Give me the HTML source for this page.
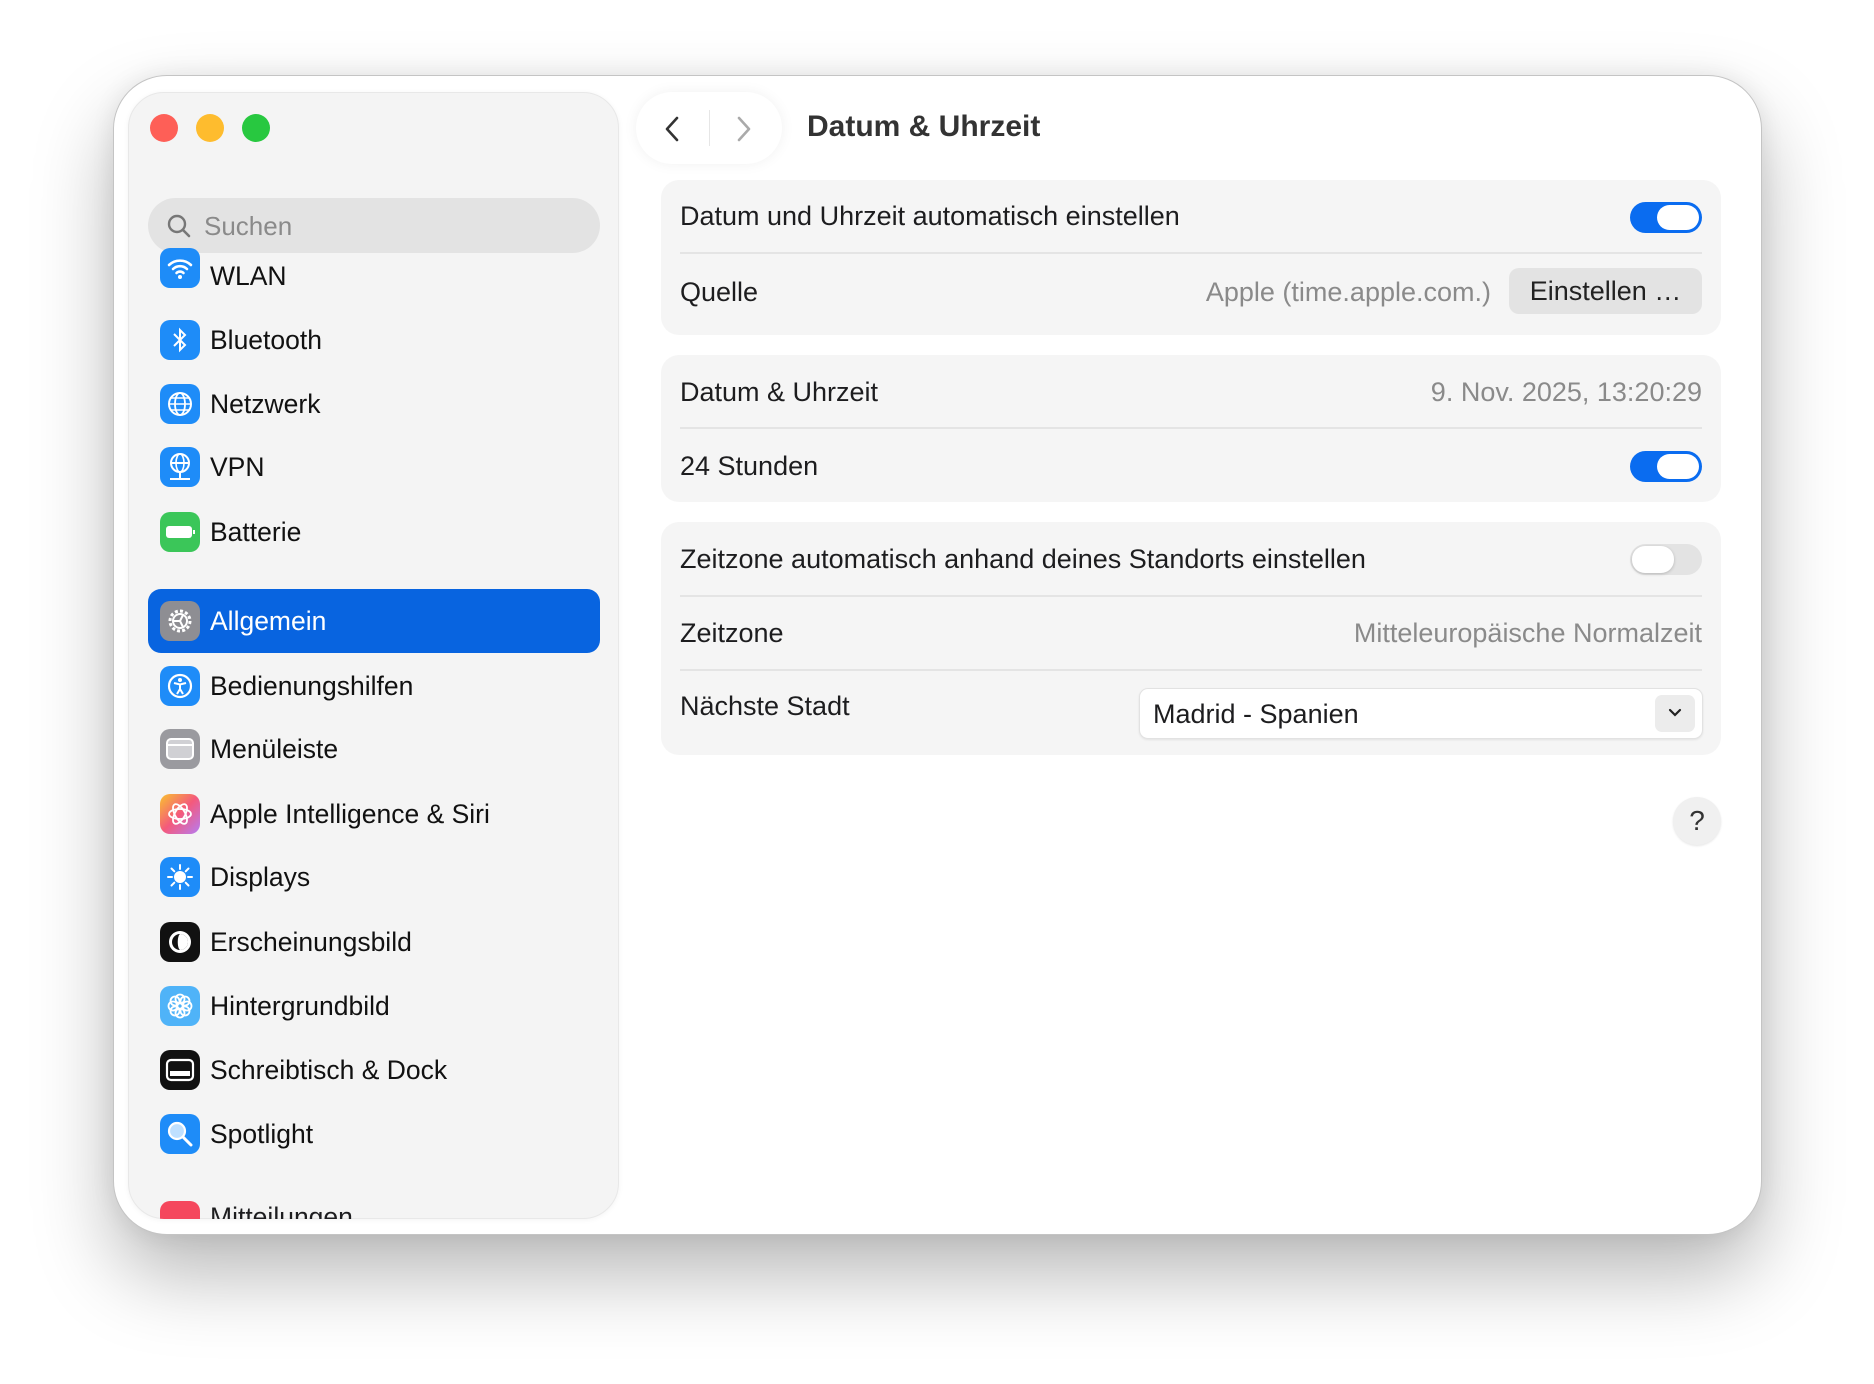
<!DOCTYPE html>
<html><head><meta charset="utf-8"><style>
*{margin:0;padding:0;box-sizing:border-box}
body{width:1874px;height:1384px;background:#fff;font-family:"Liberation Sans",sans-serif;position:relative;overflow:hidden;color:#1d1d1f}
.win{position:absolute;left:113px;top:75px;width:1649px;height:1160px;background:#fff;border-radius:54px;border:1px solid #c4c4c4;box-shadow:0 40px 80px rgba(0,0,0,.28),0 0 24px rgba(0,0,0,.08);overflow:hidden}
.side{position:absolute;left:128px;top:92px;width:491px;height:1127px;background:#f4f4f4;border-radius:36px;border:1px solid #e8e8e8;overflow:hidden;box-shadow:0 1px 6px rgba(0,0,0,.05)}
.dot{position:absolute;top:114px;width:28px;height:28px;border-radius:50%}
.search{position:absolute;left:148px;top:198px;width:452px;height:55px;background:#e3e3e3;border-radius:28px}
.search span{position:absolute;left:56px;top:13px;font-size:26px;color:#8a8a8a}
.item{position:absolute;left:148px;width:452px;height:64px}
.item .ic{position:absolute;left:12px;top:12px;width:40px;height:40px;border-radius:10px;display:flex;align-items:center;justify-content:center}
.item .t{position:absolute;left:62px;top:17px;font-size:26.5px;color:#111}
.sel{background:#0864e0;border-radius:13px}
.sel .t{color:#fff}
.nav{position:absolute;left:636px;top:92px;width:146px;height:72px;background:#fff;border-radius:36px;box-shadow:0 0 14px rgba(0,0,0,.06)}
.title{position:absolute;left:807px;top:110px;font-size:30px;font-weight:bold;color:#333}
.card{position:absolute;left:661px;width:1060px;background:#f5f5f5;border-radius:18px}
.row{position:absolute;left:19px;right:19px;font-size:27px;color:#1d1d1f}
.sep{position:absolute;left:19px;right:19px;height:2px;background:#e4e4e4}
.val{position:absolute;right:19px;font-size:27px;color:#8a8a8a}
.tog{position:absolute;width:72px;height:31px;border-radius:16px;background:#0a6cf0}
.tog::after{content:"";position:absolute;right:3px;top:3px;width:42px;height:25px;border-radius:13px;background:#fff}
.tog.off{background:#e3e3e3}
.tog.off::after{left:2px;right:auto;top:2px;width:42px;height:27px;box-shadow:0 1px 3px rgba(0,0,0,.2)}
</style></head><body>
<div class="win"></div>
<div class="side"></div>
<div class="dot" style="left:150px;background:#fe5f57"></div>
<div class="dot" style="left:196px;background:#febc2e"></div>
<div class="dot" style="left:242px;background:#28c840"></div>
<div class="search"><svg style="position:absolute;left:18px;top:15px" width="26" height="26" viewBox="0 0 26 26"><circle cx="11" cy="11" r="8" fill="none" stroke="#777" stroke-width="2.4"/><path d="M17 17l6 6" stroke="#777" stroke-width="2.6" stroke-linecap="round"/></svg><span>Suchen</span></div>

<div class="item" style="top:244px"><div class="ic" style="background:#1e8cf8;top:4px"><svg width="28" height="24" viewBox="0 0 28 24"><path d="M3 9a16 16 0 0 1 22 0M7 13a10 10 0 0 1 14 0M10.5 17a5 5 0 0 1 7 0" fill="none" stroke="#fff" stroke-width="2.6" stroke-linecap="round"/><circle cx="14" cy="21" r="2" fill="#fff"/></svg></div><div class="t" style="top:17px">WLAN</div></div>
<div class="item" style="top:308px"><div class="ic" style="background:#1e8cf8"><svg width="20" height="28" viewBox="0 0 20 28"><path d="M4 8l11 11-5 5V4l5 5L4 20" fill="none" stroke="#fff" stroke-width="2"/></svg></div><div class="t">Bluetooth</div></div>
<div class="item" style="top:372px"><div class="ic" style="background:#1e8cf8"><svg width="30" height="30" viewBox="0 0 30 30"><circle cx="15" cy="15" r="11" fill="none" stroke="#fff" stroke-width="2"/><ellipse cx="15" cy="15" rx="5" ry="11" fill="none" stroke="#fff" stroke-width="1.8"/><path d="M4 15h22M6 9h18M6 21h18" stroke="#fff" stroke-width="1.6"/></svg></div><div class="t">Netzwerk</div></div>
<div class="item" style="top:435px"><div class="ic" style="background:#1e8cf8"><svg width="30" height="32" viewBox="0 0 30 32"><circle cx="15" cy="12" r="9" fill="none" stroke="#fff" stroke-width="2"/><ellipse cx="15" cy="12" rx="4" ry="9" fill="none" stroke="#fff" stroke-width="1.6"/><path d="M6 12h18M15 21v6M5 28h20" stroke="#fff" stroke-width="2"/></svg></div><div class="t">VPN</div></div>
<div class="item" style="top:500px"><div class="ic" style="background:#3bc659"><svg width="32" height="18" viewBox="0 0 32 18"><rect x="2" y="3" width="26" height="12" rx="3" fill="#fff"/><rect x="29" y="7" width="2" height="4" fill="#fff"/></svg></div><div class="t">Batterie</div></div>
<div class="item sel" style="top:589px"><div class="ic" style="background:#8e8e93"><svg width="30" height="30" viewBox="0 0 30 30"><circle cx="15" cy="15" r="10" fill="none" stroke="#fff" stroke-width="3" stroke-dasharray="3 2.2"/><circle cx="15" cy="15" r="7" fill="none" stroke="#fff" stroke-width="2"/><path d="M15 15l-6 0M15 15l3 6M15 15l3-6" stroke="#fff" stroke-width="2"/></svg></div><div class="t">Allgemein</div></div>
<div class="item" style="top:654px"><div class="ic" style="background:#1e8cf8"><svg width="30" height="30" viewBox="0 0 30 30"><circle cx="15" cy="15" r="11" fill="none" stroke="#fff" stroke-width="2.2"/><circle cx="15" cy="9" r="2" fill="#fff"/><path d="M9 12l6 1.5 6-1.5M15 13v5l-3 5M15 18l3 5" fill="none" stroke="#fff" stroke-width="2"/></svg></div><div class="t">Bedienungshilfen</div></div>
<div class="item" style="top:717px"><div class="ic" style="background:#9a9a9f"><svg width="30" height="24" viewBox="0 0 30 24"><rect x="2" y="2" width="26" height="20" rx="4" fill="#d0d0d4" stroke="#fff" stroke-width="2"/><path d="M3 8h24" stroke="#fff" stroke-width="2"/></svg></div><div class="t">Menüleiste</div></div>
<div class="item" style="top:782px"><div class="ic" style="background:linear-gradient(135deg,#f9c22e,#f4597c 50%,#b57cf2)"><svg width="30" height="30" viewBox="0 0 30 30"><ellipse cx="15" cy="15" rx="11" ry="5" fill="none" stroke="#fff" stroke-width="1.8"/><ellipse cx="15" cy="15" rx="11" ry="5" transform="rotate(60 15 15)" fill="none" stroke="#fff" stroke-width="1.8"/><ellipse cx="15" cy="15" rx="11" ry="5" transform="rotate(-60 15 15)" fill="none" stroke="#fff" stroke-width="1.8"/></svg></div><div class="t">Apple Intelligence &amp; Siri</div></div>
<div class="item" style="top:845px"><div class="ic" style="background:#1e8cf8"><svg width="30" height="30" viewBox="0 0 30 30"><circle cx="15" cy="15" r="6" fill="#fff"/><path d="M15 3v4M15 23v4M3 15h4M23 15h4M6.5 6.5l2.8 2.8M20.7 20.7l2.8 2.8M6.5 23.5l2.8-2.8M20.7 9.3l2.8-2.8" stroke="#fff" stroke-width="2" stroke-linecap="round"/></svg></div><div class="t">Displays</div></div>
<div class="item" style="top:910px"><div class="ic" style="background:#111"><svg width="30" height="30" viewBox="0 0 30 30"><circle cx="15" cy="15" r="11" fill="#fff"/><circle cx="15" cy="15" r="8" fill="#111"/><path d="M15 7a8 8 0 0 1 0 16c-3-2-3-14 0-16z" fill="#fff"/></svg></div><div class="t">Erscheinungsbild</div></div>
<div class="item" style="top:974px"><div class="ic" style="background:#4fb3f8"><svg width="30" height="30" viewBox="0 0 30 30"><g fill="none" stroke="#fff" stroke-width="1.8"><circle cx="15" cy="8" r="4.5"/><circle cx="15" cy="22" r="4.5"/><circle cx="8" cy="15" r="4.5"/><circle cx="22" cy="15" r="4.5"/><circle cx="10" cy="10" r="4.5"/><circle cx="20" cy="20" r="4.5"/><circle cx="20" cy="10" r="4.5"/><circle cx="10" cy="20" r="4.5"/></g></svg></div><div class="t">Hintergrundbild</div></div>
<div class="item" style="top:1038px"><div class="ic" style="background:#111"><svg width="30" height="24" viewBox="0 0 30 24"><rect x="2" y="2" width="26" height="20" rx="4" fill="none" stroke="#fff" stroke-width="2.2"/><rect x="5" y="13" width="20" height="5" fill="#fff"/></svg></div><div class="t">Schreibtisch &amp; Dock</div></div>
<div class="item" style="top:1102px"><div class="ic" style="background:#1e8cf8"><svg width="30" height="30" viewBox="0 0 30 30"><circle cx="12" cy="12" r="8" fill="#bfe0ff" stroke="#fff" stroke-width="2.2"/><path d="M18 18l8 8" stroke="#fff" stroke-width="3" stroke-linecap="round"/></svg></div><div class="t">Spotlight</div></div>
<div style="position:absolute;left:128px;top:1180px;width:491px;height:39px;overflow:hidden;border-radius:0 0 36px 36px"><div style="position:absolute;left:32px;top:21px;width:40px;height:40px;border-radius:10px;background:#f5475d"></div><div style="position:absolute;left:82px;top:22px;font-size:26.5px">Mitteilungen</div></div>

<div class="nav"><svg style="position:absolute;left:28px;top:24px" width="16" height="26" viewBox="0 0 16 26"><path d="M13 2L3 13l10 11" fill="none" stroke="#333" stroke-width="2.6" stroke-linecap="round" stroke-linejoin="round"/></svg><div style="position:absolute;left:73px;top:18px;width:1px;height:36px;background:#e6e6e6"></div><svg style="position:absolute;left:100px;top:24px" width="16" height="26" viewBox="0 0 16 26"><path d="M3 2l10 11L3 24" fill="none" stroke="#aaa" stroke-width="2.6" stroke-linecap="round" stroke-linejoin="round"/></svg></div>
<div class="title">Datum &amp; Uhrzeit</div>

<div class="card" style="top:180px;height:155px">
 <div class="row" style="top:21px">Datum und Uhrzeit automatisch einstellen</div>
 <div class="tog" style="right:19px;top:22px"></div>
 <div class="sep" style="top:72px"></div>
 <div class="row" style="top:97px">Quelle</div>
 <div class="val" style="right:230px;top:97px">Apple (time.apple.com.)</div>
 <div style="position:absolute;right:19px;top:88px;width:193px;height:46px;background:#e3e3e3;border-radius:10px;font-size:27px;text-align:center;line-height:46px;color:#222">Einstellen …</div>
</div>
<div class="card" style="top:355px;height:147px">
 <div class="row" style="top:22px">Datum &amp; Uhrzeit</div>
 <div class="val" style="top:22px">9. Nov. 2025, 13:20:29</div>
 <div class="sep" style="top:72px"></div>
 <div class="row" style="top:96px">24 Stunden</div>
 <div class="tog" style="right:19px;top:96px"></div>
</div>
<div class="card" style="top:522px;height:233px">
 <div class="row" style="top:22px">Zeitzone automatisch anhand deines Standorts einstellen</div>
 <div class="tog off" style="right:19px;top:22px"></div>
 <div class="sep" style="top:73px"></div>
 <div class="row" style="top:96px">Zeitzone</div>
 <div class="val" style="top:96px">Mitteleuropäische Normalzeit</div>
 <div class="sep" style="top:147px"></div>
 <div class="row" style="top:169px">Nächste Stadt</div>
 <div style="position:absolute;left:478px;top:166px;width:564px;height:51px;background:#fff;border:1px solid #e2e2e2;border-radius:9px;box-shadow:0 1px 2px rgba(0,0,0,.08)">
  <div style="position:absolute;left:13px;top:10px;font-size:27px">Madrid - Spanien</div>
  <div style="position:absolute;right:7px;top:6px;width:40px;height:37px;background:#ececec;border-radius:7px"><svg style="position:absolute;left:13px;top:13px" width="14" height="10" viewBox="0 0 14 10"><path d="M2 2l5 5 5-5" fill="none" stroke="#222" stroke-width="2.2" stroke-linecap="round"/></svg></div>
 </div>
</div>
<div style="position:absolute;left:1673px;top:797px;width:48px;height:48px;border-radius:50%;background:#f0f0f0;box-shadow:0 1px 2px rgba(0,0,0,.1);font-size:28px;text-align:center;line-height:48px;color:#333">?</div>
</body></html>
